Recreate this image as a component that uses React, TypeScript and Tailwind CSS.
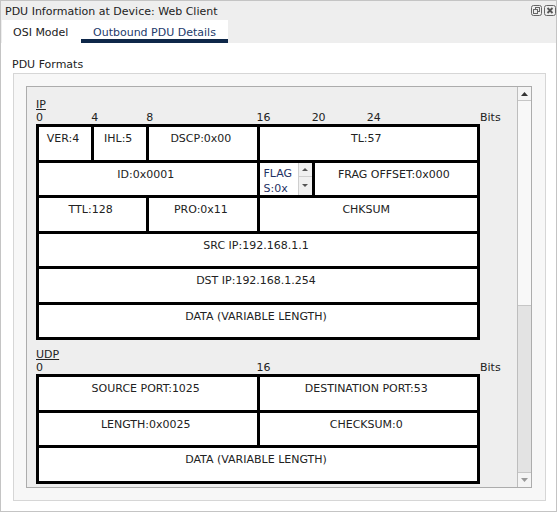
import React from "react";

const cell =
  "bg-white text-center pt-[5px] pr-[4px] leading-[13px] h-[32.5px] whitespace-nowrap overflow-hidden";

function UpTri({ w = 7, h = 4, color = "#333" }: { w?: number; h?: number; color?: string }) {
  return (
    <svg width={w} height={h} viewBox={`0 0 ${w} ${h}`}>
      <polygon points={`0,${h} ${w / 2},0 ${w},${h}`} fill={color} />
    </svg>
  );
}
function DownTri({ w = 7, h = 4, color = "#333" }: { w?: number; h?: number; color?: string }) {
  return (
    <svg width={w} height={h} viewBox={`0 0 ${w} ${h}`}>
      <polygon points={`0,0 ${w},0 ${w / 2},${h}`} fill={color} />
    </svg>
  );
}

function BitRow({ labels }: { labels: string[] }) {
  return (
    <div className="flex h-[13px] leading-[13px]">
      <div className="w-[444px] grid grid-cols-8 gap-[3px] pr-[6px]">
        {labels.map((l, i) => (
          <span key={i} className="whitespace-nowrap">
            {l}
          </span>
        ))}
      </div>
      <span>Bits</span>
    </div>
  );
}

export default function App() {
  return (
    <div className="w-[558px] h-[513px] bg-white font-['DejaVu_Sans',sans-serif] text-[11px] leading-[13px] text-[#222]">
      <div className="w-[557px] h-[512px] border border-[#c4c4c4] flex flex-col">
        {/* title bar */}
        <div className="h-[19px] bg-[#eeeeee] flex items-start justify-between pl-[4px] pt-[4px]">
          <span>PDU Information at Device: Web Client</span>
          <div className="flex items-center gap-[2px] mt-[0px]">
            <svg width="11" height="11" viewBox="0 0 11 11">
              <rect x="0.5" y="0.5" width="10" height="10" rx="2" fill="none" stroke="#666" />
              <rect x="4.5" y="2.5" width="4" height="4" fill="none" stroke="#666" />
              <rect x="2.5" y="4.5" width="4" height="4" fill="#eeeeee" stroke="#666" />
            </svg>
            <svg width="12" height="11" viewBox="0 0 12 11">
              <rect x="0.5" y="0.5" width="11" height="10" rx="2" fill="none" stroke="#666" />
              <path d="M3.5 3 L8.5 8 M8.5 3 L3.5 8" stroke="#555" strokeWidth="1.8" />
            </svg>
          </div>
        </div>
        {/* tabs */}
        <div className="h-[23px] bg-[#eeeeee] flex pl-[1px]">
          <div className="flex bg-white">
            <div className="w-[79px] pl-[11px] pt-[6px]">OSI Model</div>
            <div className="w-[147px] pl-[12px] pt-[6px] text-[#233a6b] border-b-4 border-[#0e2749]">
              Outbound PDU Details
            </div>
          </div>
        </div>
        {/* content */}
        <div className="flex-1 bg-white pt-[15px] pl-[11px]">
          <div>PDU Formats</div>
          <div className="mt-[2px] ml-[1px] w-[533px] h-[428px] border border-[#d6d6d6] bg-[#f7f7f7] pt-[12px] pl-[12px]">
            <div className="w-[506px] h-[402px] border border-[#acacac] flex">
              <div className="flex-1 bg-[#eeeeee] pt-[11px] pl-[9px] overflow-hidden">
                <div className="underline underline-offset-[1px]">IP</div>
                <BitRow labels={["0", "4", "8", "", "16", "20", "24", ""]} />
                <div className="w-[444px] grid grid-cols-8 gap-[3px] p-[3px] bg-black">
                  <div className={cell}>VER:4</div>
                  <div className={cell}>IHL:5</div>
                  <div className={`${cell} col-span-2`}>DSCP:0x00</div>
                  <div className={`${cell} col-span-4`}>TL:57</div>

                  <div className={`${cell} col-span-4`}>ID:0x0001</div>
                  <div className="bg-white flex h-[32.5px] overflow-hidden">
                    <div className="flex-1 pl-[4px] pt-[3px] leading-[15px] text-[#1f3264] overflow-hidden whitespace-nowrap">
                      FLAG
                      <br />
                      S:0x
                    </div>
                    <div className="w-[14px] flex flex-col bg-[#f0f0f0] border-l border-[#cfcfcf]">
                      <div className="h-[14px] border-b border-[#cfcfcf] flex items-center justify-center">
                        <UpTri w={6} h={3} color="#555" />
                      </div>
                      <div className="flex-1 flex items-center justify-center">
                        <DownTri w={6} h={3} color="#555" />
                      </div>
                    </div>
                  </div>
                  <div className={`${cell} col-span-3`}>FRAG OFFSET:0x000</div>

                  <div className={`${cell} col-span-2`}>TTL:128</div>
                  <div className={`${cell} col-span-2`}>PRO:0x11</div>
                  <div className={`${cell} col-span-4`}>CHKSUM</div>

                  <div className={`${cell} col-span-8`}>SRC IP:192.168.1.1</div>
                  <div className={`${cell} col-span-8`}>DST IP:192.168.1.254</div>
                  <div className={`${cell} col-span-8`}>DATA (VARIABLE LENGTH)</div>
                </div>

                <div className="mt-[8px] underline underline-offset-[1px]">UDP</div>
                <BitRow labels={["0", "", "", "", "16", "", "", ""]} />
                <div className="w-[444px] grid grid-cols-2 gap-[3px] p-[3px] bg-black">
                  <div className={cell}>SOURCE PORT:1025</div>
                  <div className={cell}>DESTINATION PORT:53</div>
                  <div className={cell}>LENGTH:0x0025</div>
                  <div className={cell}>CHECKSUM:0</div>
                  <div className={`${cell} col-span-2`}>DATA (VARIABLE LENGTH)</div>
                </div>
              </div>
              {/* scrollbar */}
              <div className="w-[14px] flex flex-col border-l border-[#bdbdbd]">
                <div className="h-[14px] border-b border-[#c6c6c6] bg-[#f4f4f4] flex items-center justify-center">
                  <UpTri w={7} h={4} color="#333" />
                </div>
                <div className="h-[205px] bg-[#f8f8f8] border-b border-[#c6c6c6]" />
                <div className="flex-1 bg-[#e3e3e3]" />
                <div className="h-[15px] border-t border-[#c6c6c6] bg-[#f4f4f4] flex items-center justify-center">
                  <DownTri w={7} h={4} color="#999" />
                </div>
              </div>
            </div>
          </div>
        </div>
      </div>
    </div>
  );
}
